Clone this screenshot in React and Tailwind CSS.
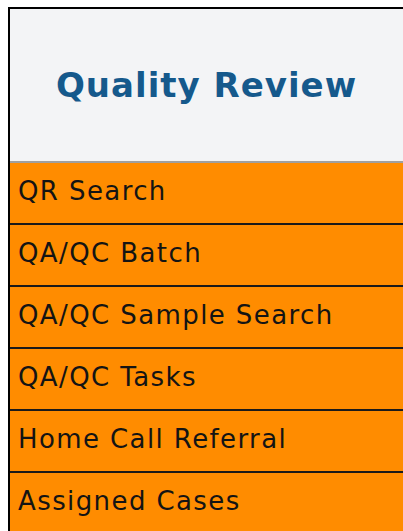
import React from 'react';

const links = [
  'QR Search',
  'QA/QC Batch',
  'QA/QC Sample Search',
  'QA/QC Tasks',
  'Home Call Referral',
  'Assigned Cases',
];

const App = () => {
  return (
    <div className="bg-white min-h-[531px] pt-[7px] pl-[8px] overflow-hidden" style={{ fontFamily: '"DejaVu Sans", Verdana, sans-serif' }}>
      <div className="border-l-2 border-t-2 border-black">
        {/* module header */}
        <div className="h-[154px] bg-[#f3f4f6] border-b-2 border-[#a0a0a0] flex items-center justify-center">
          <h1 className="text-[34px] font-bold text-[#15598c] tracking-[1px] leading-none">Quality Review</h1>
        </div>

        {/* menu links */}
        <ul>
          {links.map((label) => (
            <li key={label} className="h-[62px] bg-[#ff8c00] border-b-2 border-[#1a1a1a] flex items-center pl-[8px] pb-[4px] text-[26px] tracking-[1.4px] text-[#141414]">
              {label}
            </li>
          ))}
        </ul>
      </div>
    </div>
  );
};

export default App;
